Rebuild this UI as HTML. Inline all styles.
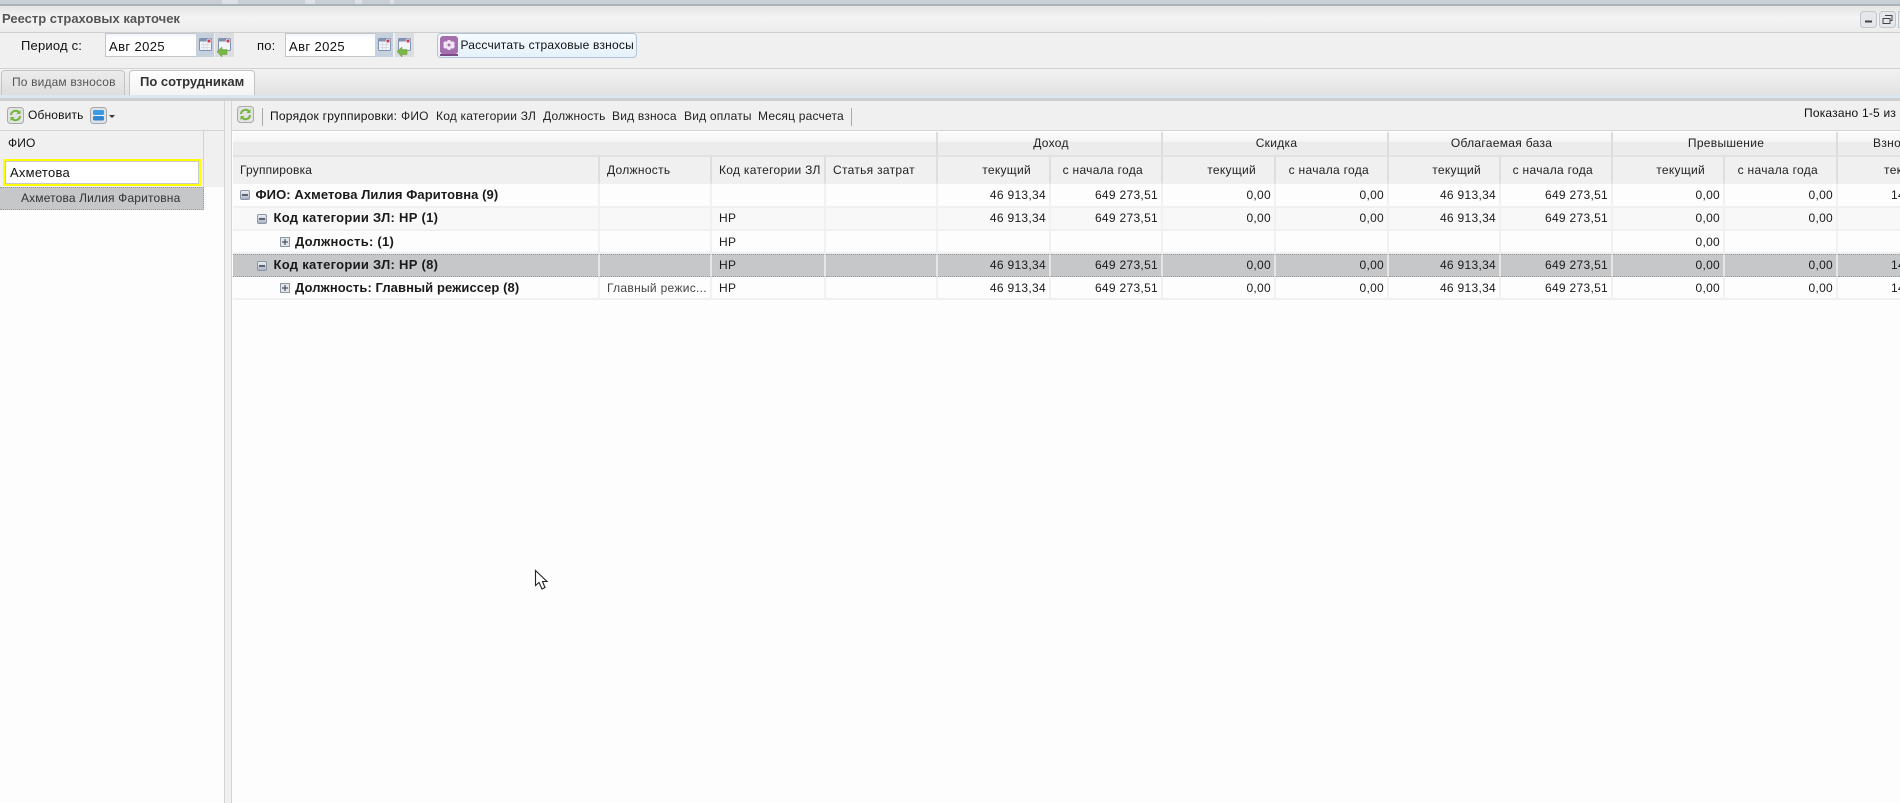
<!DOCTYPE html>
<html lang="ru"><head><meta charset="utf-8"><title>Реестр страховых карточек</title>
<style>
html,body{margin:0;padding:0;width:1900px;height:803px;overflow:hidden;background:#f0f0f0}
body{position:relative;font:12px "Liberation Sans",sans-serif;color:#1a1a1a}
.a{position:absolute;white-space:nowrap}
.t{position:absolute;white-space:nowrap;font-family:"Liberation Sans",sans-serif;font-size:12px;letter-spacing:.2px;line-height:16px}
.date{position:absolute;top:33px;height:22px;background:linear-gradient(#f1f5fa,#fff 5px);border:1px solid #c3c6ca;font:13px/25px "Liberation Sans",sans-serif;letter-spacing:.4px;color:#111;padding-left:3px;box-sizing:content-box}
.ib{position:absolute;top:33px;width:18px;height:24px}
table{position:absolute;left:233px;top:132px;border-collapse:separate;border-spacing:0;table-layout:fixed;width:1679px;font-family:"Liberation Sans",sans-serif;font-size:12px;letter-spacing:.3px}
th{font-weight:normal;padding:0;overflow:hidden;white-space:nowrap;color:#222;box-sizing:border-box}
.h1 th{height:25px;padding-bottom:1px;padding-left:3px;background:linear-gradient(#fafafa 0,#f6f6f6 40%,#ececec 45%,#ececec 100%);border-right:2px solid #dcdcdc;border-bottom:2px solid #e2e2e2}
.h2 th{height:27px;padding-bottom:0;background:#f0f0f0;border-right:2px solid #dedede;border-bottom:1px solid #f0f0f0;text-align:right;padding-right:18px}
td{padding:0 3px 0 5px;border-right:2px solid #f0f1f3;border-bottom:2px solid #eef0f1;overflow:hidden;white-space:nowrap;text-align:right;box-sizing:border-box;color:#1a1a1a;background:#fdfdfe;height:23px}
tr.r1 td{height:24px}
tr.r1 td.g,tr.alt td,tr.sel td{padding-bottom:2px}
td.l{text-align:left}
td.g{text-align:left;font-weight:bold;position:relative;font-size:13px;letter-spacing:.08px}
tr.alt td.g,tr.sel td.g{letter-spacing:.28px}
tr.alt td{background:#f8f8f8}
tr.sel td{background:#c6c7c9;border-right-color:#e6e6e6;border-top:1px dotted #999;border-bottom:1px dotted #999}
.box{position:absolute;top:6px;width:10px;height:10px}
</style></head><body>
<svg width="0" height="0" style="position:absolute">
<defs>
<linearGradient id="bx" x1="0" y1="0" x2="0" y2="1"><stop offset="0" stop-color="#f0f3f7"/><stop offset="1" stop-color="#a5b1c1"/></linearGradient>
<symbol id="minus" viewBox="0 0 10 10"><rect x=".5" y=".5" width="9" height="9" rx="1.500" fill="url(#bx)" stroke="#8a96a6"/><path d="M2 5h6" stroke="#334" stroke-width="1.400"/></symbol>
<symbol id="plus" viewBox="0 0 10 10"><rect x=".5" y=".5" width="9" height="9" fill="#e2e5ea" stroke="#8a96a6"/><path d="M2 5h6M5 2v6" stroke="#334"/></symbol>
<symbol id="cal" viewBox="0 0 18 24"><rect x="0" y="0" width="18" height="24" fill="#c5d2de"/><rect x="3.500" y="5.500" width="12" height="12" rx="1" fill="#f3f4f7" stroke="#8093b0"/><rect x="3.500" y="5.500" width="12" height="3" fill="#8093b0"/><circle cx="13" cy="8" r="2" fill="#c9405a" stroke="#fff" stroke-width=".7"/><path d="M5 11.500h9M5 14.500h9M7.500 9v8M11 9v8" stroke="#cfd5de" stroke-width=".7"/></symbol>
<symbol id="calg" viewBox="0 0 19 24"><rect x="0" y="0" width="19" height="24" fill="#dcdde0"/><rect x="3.500" y="5.500" width="12" height="12" rx="1" fill="#f3f4f7" stroke="#8093b0"/><rect x="3.500" y="5.500" width="12" height="3" fill="#8093b0"/><circle cx="13" cy="8" r="2" fill="#c9405a" stroke="#fff" stroke-width=".7"/><path d="M2 18.500l5-4.500v2.500h5v5H7V24z" fill="#7ab648" stroke="#649c38" stroke-width=".5"/></symbol>
<symbol id="ref" viewBox="0 0 17 17"><rect x=".5" y=".5" width="16" height="16" rx="3" fill="#e3e3e3" stroke="#a9a9a9"/><path d="M4 8a4.500 4.500 0 0 1 8-2.500" fill="none" stroke="#74b53c" stroke-width="2"/><path d="M13 9a4.500 4.500 0 0 1-8 2.500" fill="none" stroke="#74b53c" stroke-width="2"/><path d="M13.500 3v4h-4zM3.500 14v-4h4z" fill="#74b53c"/></symbol>
</defs></svg>

<!-- top strip -->
<div class="a" style="left:0;top:0;width:1900px;height:4px;background:#c9cfd3"></div>
<div class="a" style="left:222px;top:0;width:16px;height:4px;background:#dde1e5"></div>
<div class="a" style="left:305px;top:0;width:10px;height:4px;background:#dde1e5"></div>
<div class="a" style="left:355px;top:0;width:7px;height:4px;background:#dde1e5"></div>
<div class="a" style="left:390px;top:0;width:4px;height:4px;background:#dde1e5"></div>
<div class="a" style="left:0;top:4px;width:1900px;height:2px;background:#a9b3bc"></div>

<!-- title bar -->
<div class="a" style="left:0;top:6px;width:1900px;height:26px;background:linear-gradient(#e4e4e4,#f4f4f4 45%,#ececec);border-bottom:1px solid #cfcfcf"></div>
<div class="t" style="left:2px;top:11px;font-size:13px;font-weight:bold;color:#555;letter-spacing:0">Реестр страховых карточек</div>
<svg class="a" style="left:1860px;top:11px" width="40" height="18"><rect x=".5" y=".5" width="16" height="16" rx="3" fill="#e6e7ea" stroke="#c0c6cc"/><path d="M5 10.500h7" stroke="#444" stroke-width="2"/><rect x="19.500" y=".5" width="16" height="16" rx="3" fill="#e6e7ea" stroke="#c0c6cc"/><path d="M25 4.500h7v5h-2M23 7.500h7v5h-7z" fill="none" stroke="#444"/><rect x="38.500" y=".5" width="8" height="16" fill="#e6e7ea" stroke="#c0c6cc"/></svg>

<!-- period toolbar -->
<div class="t" style="left:21px;top:38px;font-size:13px;color:#111;letter-spacing:.2px">Период с:</div>
<div class="date" style="left:105px;width:87px">Авг 2025</div>
<svg class="ib" style="left:196px"><use href="#cal"/></svg>
<svg class="ib" style="left:215px;width:19px"><use href="#calg"/></svg>
<div class="t" style="left:257px;top:38px;font-size:13px;color:#111;letter-spacing:.2px">по:</div>
<div class="date" style="left:285px;width:86px">Авг 2025</div>
<svg class="ib" style="left:375px"><use href="#cal"/></svg>
<svg class="ib" style="left:395px;width:19px"><use href="#calg"/></svg>
<div class="a" style="left:437px;top:33px;width:198px;height:23px;border:1px solid #b3c4d4;border-radius:4px;background:linear-gradient(#f6fbff,#e4f1fb)"></div>
<svg class="a" style="left:440px;top:36px" width="18" height="21"><rect width="18" height="18" rx="3" fill="#a56fae"/><rect y="18" width="18" height="2" fill="#7b4a85"/><path d="M9 4a2 2 0 0 1 2 2 2 2 0 0 1 3 3 2 2 0 0 1-3 3 2 2 0 0 1-4 0 2 2 0 0 1-3-3 2 2 0 0 1 3-3 2 2 0 0 1 2-2z" fill="#f2e6f4"/><circle cx="9" cy="9" r="1.500" fill="#a56fae"/></svg>
<div class="t" style="left:460.500px;top:37px;color:#111;letter-spacing:.2px">Рассчитать страховые взносы</div>
<div class="a" style="left:0;top:68px;width:1900px;height:1px;background:#d2d2d2"></div>

<!-- tabs -->
<div class="a" style="left:0;top:69px;width:1900px;height:26px;background:linear-gradient(#f2f2f2,#e2e2e2)"></div>
<div class="a" style="left:1px;top:70px;width:124px;height:25px;background:linear-gradient(#ececec,#dedede);border:1px solid #c4c4c4;border-bottom:0;border-radius:4px 4px 0 0;box-sizing:border-box"></div>
<div class="t" style="left:12px;top:74px;color:#555;letter-spacing:.15px">По видам взносов</div>
<div class="a" style="left:129px;top:70px;width:126px;height:26px;background:linear-gradient(#fff,#f3f3f3);border:1px solid #c4c4c4;border-bottom:0;border-radius:4px 4px 0 0;box-sizing:border-box"></div>
<div class="t" style="left:140px;top:74px;font-size:13px;font-weight:bold;color:#333;letter-spacing:0">По сотрудникам</div>
<div class="a" style="left:0;top:95px;width:1900px;height:3px;background:#d9e7f1"></div>
<div class="a" style="left:0;top:98px;width:1900px;height:3px;background:#cfcfcf"></div>

<!-- left panel -->
<div class="a" style="left:0;top:101px;width:224px;height:702px;background:#fdfdfe;border-right:1px solid #d5d5d5"></div>
<div class="a" style="left:0;top:101px;width:224px;height:29px;background:#f0f0f0;border-bottom:1px solid #d4d4d4"></div>
<svg class="a" style="left:7px;top:107px" width="17" height="17"><use href="#ref"/></svg>
<div class="t" style="left:28px;top:107px;color:#111;letter-spacing:.15px">Обновить</div>
<svg class="a" style="left:90px;top:107px" width="28" height="17"><rect x=".5" y=".5" width="16" height="16" rx="3" fill="#dfe2e6" stroke="#a5a9ae"/><rect x="3" y="3" width="11" height="5" rx="1.500" fill="#3d9ae0"/><rect x="3" y="8" width="11" height="1" fill="#f4f8fb"/><rect x="3" y="9" width="11" height="4.500" rx="1.500" fill="#2f86cf"/><path d="M19 8h6l-3 3z" fill="#333"/></svg>
<div class="a" style="left:0;top:131px;width:224px;height:56px;background:#f0f0f0"></div>
<div class="a" style="left:203px;top:131px;width:1px;height:56px;background:#d2d2d2"></div>
<div class="t" style="left:8px;top:135px;color:#111;letter-spacing:.1px">ФИО</div>
<div class="a" style="left:3px;top:159px;width:198px;height:27px;box-sizing:border-box;border:2px solid #ffff00;background:#fff;font:13px/23px 'Liberation Sans',sans-serif;color:#111;padding-left:5px;letter-spacing:.25px;box-shadow:inset 0 0 0 1px #c9c9c9">Ахметова</div>
<div class="a" style="left:0;top:187px;width:204px;height:23px;background:#c6c7c9;border-top:1px dotted #9a9a9a;border-bottom:1px dotted #9a9a9a;border-right:1px dotted #9a9a9a;box-sizing:border-box"></div>
<div class="t" style="left:21px;top:190px;color:#333;letter-spacing:.15px">Ахметова Лилия Фаритовна</div>

<!-- splitter -->
<div class="a" style="left:225px;top:101px;width:7px;height:702px;background:#f0f0f0;border-right:1px solid #d5d5d5;box-sizing:border-box"></div>

<!-- right panel -->
<div class="a" style="left:232px;top:101px;width:1668px;height:702px;background:#fdfdfe"></div>
<div class="a" style="left:232px;top:101px;width:1668px;height:29px;background:#f0f0f0;border-bottom:1px solid #d4d4d4"></div>
<svg class="a" style="left:237px;top:106px" width="17" height="17"><use href="#ref"/></svg>
<div class="a" style="left:262px;top:108px;width:1px;height:18px;background:#a9a9a9"></div>
<div class="t" style="left:270px;top:108px;color:#111;letter-spacing:.25px">Порядок группировки:</div>
<div class="t" style="left:401px;top:107.500px;color:#222">ФИО</div>
<div class="t" style="left:436px;top:107.500px;color:#222">Код категории ЗЛ</div>
<div class="t" style="left:543px;top:107.500px;color:#222">Должность</div>
<div class="t" style="left:612px;top:107.500px;color:#222">Вид взноса</div>
<div class="t" style="left:684px;top:107.500px;color:#222">Вид оплаты</div>
<div class="t" style="left:758px;top:107.500px;color:#222">Месяц расчета</div>
<div class="a" style="left:851px;top:108px;width:1px;height:18px;background:#a9a9a9"></div>
<div class="t" style="left:1804px;top:105px;color:#111">Показано 1-5 из 5</div>

<table>
<colgroup><col style="width:367px"><col style="width:112px"><col style="width:114px"><col style="width:112px"><col style="width:113px"><col style="width:112px"><col style="width:113px"><col style="width:113px"><col style="width:112px"><col style="width:112px"><col style="width:112px"><col style="width:113px"><col style="width:112px"><col style="width:64px"></colgroup>
<tr class="h1"><th colspan="4"></th><th colspan="2">Доход</th><th colspan="2">Скидка</th><th colspan="2">Облагаемая база</th><th colspan="2">Превышение</th><th colspan="2" style="text-align:left;padding-left:35px;border-right:0">Взносы</th></tr>
<tr class="h2"><th style="text-align:left;padding-left:7px;letter-spacing:.2px">Группировка</th><th style="text-align:left;padding-left:7px">Должность</th><th style="text-align:left;padding-left:7px">Код категории ЗЛ</th><th style="text-align:left;padding-left:7px">Статья затрат</th><th>текущий</th><th>с начала года</th><th>текущий</th><th>с начала года</th><th>текущий</th><th>с начала года</th><th>текущий</th><th>с начала года</th><th style="text-align:left;padding-left:46px;border-right:0">текущий</th><th style="border-right:0"></th></tr>
<tr class="r1"><td class="g" style="padding-left:22.500px"><svg class="box" style="left:7px"><use href="#minus"/></svg>ФИО: Ахметова Лилия Фаритовна (9)</td><td></td><td></td><td></td><td>46 913,34</td><td>649 273,51</td><td>0,00</td><td>0,00</td><td>46 913,34</td><td>649 273,51</td><td>0,00</td><td>0,00</td><td class="l" style="padding-left:53px">14</td><td></td></tr>
<tr class="alt"><td class="g" style="padding-left:40.500px"><svg class="box" style="left:24px"><use href="#minus"/></svg>Код категории ЗЛ: НР (1)</td><td></td><td class="l" style="padding-left:7px">НР</td><td></td><td>46 913,34</td><td>649 273,51</td><td>0,00</td><td>0,00</td><td>46 913,34</td><td>649 273,51</td><td>0,00</td><td>0,00</td><td></td><td></td></tr>
<tr><td class="g" style="padding-left:62px;letter-spacing:.25px"><svg class="box" style="left:47px"><use href="#plus"/></svg>Должность: (1)</td><td></td><td class="l" style="padding-left:7px">НР</td><td></td><td></td><td></td><td></td><td></td><td></td><td></td><td>0,00</td><td></td><td></td><td></td></tr>
<tr class="sel"><td class="g" style="padding-left:40.500px"><svg class="box" style="left:24px"><use href="#minus"/></svg>Код категории ЗЛ: НР (8)</td><td></td><td class="l" style="padding-left:7px">НР</td><td></td><td>46 913,34</td><td>649 273,51</td><td>0,00</td><td>0,00</td><td>46 913,34</td><td>649 273,51</td><td>0,00</td><td>0,00</td><td class="l" style="padding-left:53px">14</td><td></td></tr>
<tr><td class="g" style="padding-left:62px"><svg class="box" style="left:47px"><use href="#plus"/></svg>Должность: Главный режиссер (8)</td><td class="l" style="padding-left:7px;color:#444">Главный режис...</td><td class="l" style="padding-left:7px">НР</td><td></td><td>46 913,34</td><td>649 273,51</td><td>0,00</td><td>0,00</td><td>46 913,34</td><td>649 273,51</td><td>0,00</td><td>0,00</td><td class="l" style="padding-left:53px">14</td><td></td></tr>
</table>

<!-- cursor -->
<svg class="a" style="left:534px;top:569px" width="15" height="22" viewBox="0 0 15 22"><path d="M1.500 1.500V16.500L5 13.500L8 20L11 18.500L8.500 12.500H13z" fill="#fff" stroke="#222" stroke-width="1.100"/></svg>
</body></html>
